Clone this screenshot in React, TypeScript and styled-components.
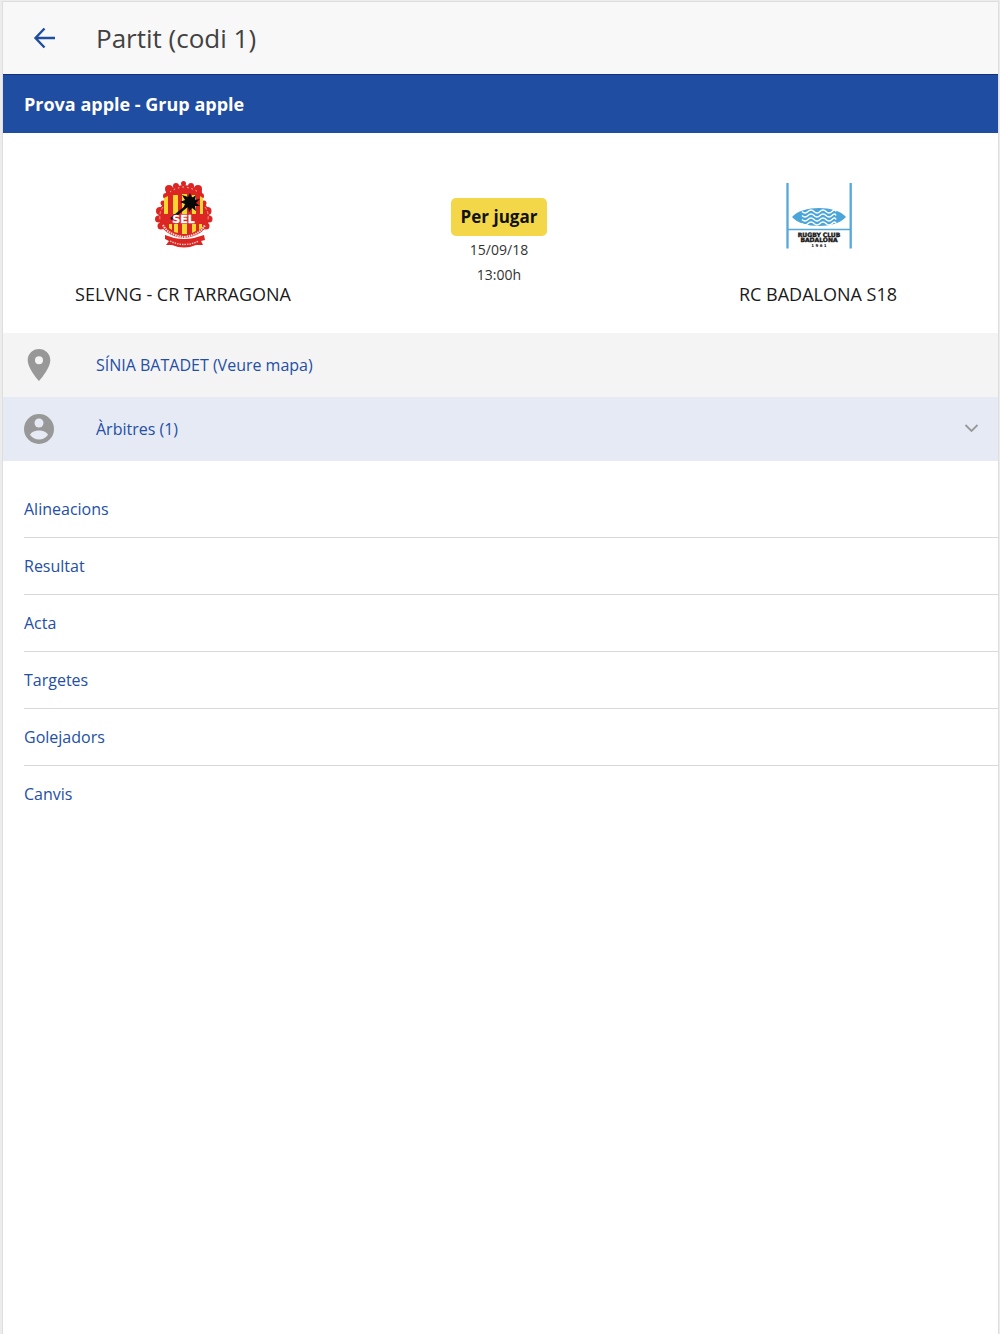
import React from "react";
import styled, { createGlobalStyle } from "styled-components";

const Global = createGlobalStyle`
  *, *::before, *::after { box-sizing: border-box; }
  html { background: #ececec; }
  body {
    margin: 0;
    font-family: "Open Sans", "Noto Sans", sans-serif;
    color: #1a1a1a;
  }
  button { font: inherit; border: 0; padding: 0; background: none; cursor: pointer; }
`;

const Page = styled.div`
  min-height: 100vh;
  padding: 1px 1px 0 2px;
  background: #ececec;
`;

const Screen = styled.div`
  min-height: calc(100vh - 1px);
  background: #fff;
  border: 1px solid #dedede;
  border-bottom: 0;
`;

const Toolbar = styled.header`
  display: flex;
  align-items: center;
  height: 72px;
  padding-left: 28px;
  background: #f8f8f8;
`;

const BackButton = styled.button`
  display: flex;
  width: 65px;
  color: #1f4da1;
`;

const Title = styled.h1`
  margin: 0;
  font-size: 26px;
  line-height: 36px;
  font-weight: 400;
  color: #424242;
`;

const Competition = styled.h2`
  margin: 0;
  padding: 16px 21px;
  background: #1f4da1;
  border-top: 1px solid #12317c;
  color: #fff;
  font-size: 18px;
  line-height: 26px;
  font-weight: 700;
`;

const Match = styled.section`
  display: grid;
  grid-template-columns: 360px 1fr 360px;
  height: 200px;
`;

const Team = styled.div`
  display: flex;
  flex-direction: column;
  align-items: center;
  gap: 31px;
  padding-top: 46px;
  font-size: 18px;
  line-height: 24px;
`;

const Status = styled.div`
  display: flex;
  flex-direction: column;
  align-items: center;
  padding: 65px 3px 0 0;
  font-size: 14px;
  line-height: 25px;
  color: #333;
`;

const Badge = styled.strong`
  padding: 6px 10px;
  margin-bottom: 1px;
  border-radius: 5px;
  background: #f3d748;
  color: #111;
  font-size: 17px;
  line-height: 26px;
`;

const InfoRow = styled.button<{ $tint: string }>`
  display: grid;
  grid-template-columns: 72px 1fr auto;
  align-items: center;
  width: 100%;
  height: 64px;
  padding: 0 17px 0 15px;
  background: ${(p) => p.$tint};
  color: #244fa5;
  font-size: 16px;
  line-height: 24px;
  text-align: left;
  & > svg { display: block; }
`;

const Label = styled.span`
  padding-left: 6px;
`;

const Menu = styled.ul`
  list-style: none;
  margin: 0;
  padding: 20px 0 0 21px;
`;

const MenuItem = styled.li`
  border-bottom: 1px solid #d9d9d9;
  &:last-child { border-bottom: 0; }
`;

const MenuLink = styled.a`
  display: block;
  padding: 16px 0;
  color: #244fa5;
  font-size: 16px;
  line-height: 24px;
  text-decoration: none;
`;

const links = ["Alineacions", "Resultat", "Acta", "Targetes", "Golejadors", "Canvis"];

const BackIcon = () => (
  <svg width="28" height="28" viewBox="0 0 28 28" fill="none" stroke="currentColor" strokeWidth="2.4" aria-hidden="true">
    <path d="M24 14H5M13.500 4.500L4.500 14l9 9.500" />
  </svg>
);

const PinIcon = () => (
  <svg width="42" height="36" viewBox="0 0 42 36" aria-hidden="true">
    <path fill="#989898" fillRule="evenodd" d="M21 2C14.600 2 9.700 6.900 9.700 13.200 9.700 21.600 21 34 21 34S32.300 21.600 32.300 13.200C32.300 6.900 27.400 2 21 2Zm0 7.200a4 4 0 1 1 0 8 4 4 0 0 1 0-8Z" />
  </svg>
);

const PersonIcon = () => (
  <svg width="42" height="36" viewBox="0 0 42 36" aria-hidden="true">
    <circle cx="21" cy="18" r="15" fill="#989898" />
    <circle cx="21" cy="12" r="4.500" fill="#e6eaf4" />
    <path fill="#e6eaf4" d="M12 23.800c1.500-3 5.800-4.200 9-4.200s7.500 1.200 9 4.200c-2 3-5.300 4.800-9 4.800s-7-1.800-9-4.800Z" />
  </svg>
);

const ChevronIcon = () => (
  <svg width="18" height="18" viewBox="0 0 18 18" fill="none" stroke="#999" strokeWidth="1.800" aria-hidden="true">
    <path d="M2.500 5l6 6 6-6" />
  </svg>
);

const scrolls = [
  [35, 16, 3], [50, 16, 3], [28, 19, 4], [57, 19, 4], [25, 26, 3], [60, 26, 3], [22, 33, 2.500], [63, 33, 2.500],
  [19, 41, 4], [66.500, 41, 4], [17.500, 49, 3.500], [68, 49, 3.500], [20, 56, 3.500], [65, 56, 3.500],
];

const SelCrest = () => (
  <svg width="81" height="72" viewBox="2 9 81 72" role="img" aria-label="SEL">
    <g fill="#db2623">
      <path d="M43 15c-6 0-11 4-17 3-2 6 0 9-3 15-4 4-6 10-5 17 2 9 10 17 25 18 15-1 23-9 25-18 1-7-1-13-5-17-3-6-1-9-3-15-6 1-11-3-17-3Z" />
      {scrolls.map(([x, y, r]) => <circle key={`${x}-${y}`} cx={x} cy={y} r={r} />)}
      <circle cx="42.500" cy="13.500" r="2.500" />
    </g>
    <path d="M29 22q5-4 13.500-5Q52 18 57 22" fill="none" stroke="#f6d9d2" strokeWidth="1" strokeDasharray="1.500 3" />
    <path d="M22 37q-4 5-3 13M64 37q4 5 3 13" fill="none" stroke="#f3b8ad" strokeWidth=".8" strokeDasharray="3 2" />
    <path d="M23 28l4-2v20h-4ZM32 25h5v21h-5ZM41 24h5v22h-5ZM51 25h4v21h-4ZM59 26l3 2v18h-3ZM28 54h3v6l-3-2ZM33 54h4v9l-4-1ZM41 54h5v10h-5ZM51 54h4v7l-4 2ZM58 54h3v4l-3 2Z" fill="#f7d730" />
    <path d="M22 44h42v10h-42Z" fill="#db2623" />
    <path d="M30 49l16-13" stroke="#111" strokeWidth="2.600" />
    <circle cx="50" cy="32" r="5" fill="#080808" />
    <path d="M49 23l2 5 4-3-1 5 5-1-4 4 4 3-5 0 1 5-4-3-3 4-1-5-5 2 2-5-5-2 5-2-3-5 6 2Z" fill="#080808" />
    <text x="42.500" y="53" fill="#fff" fontFamily="DejaVu Sans" fontSize="11" fontWeight="700" textAnchor="middle" stroke="#fff" strokeWidth=".3">SEL</text>
    <path d="M22 55q5 10 21 12Q59 65 64 55" fill="none" stroke="#f8e2dc" strokeWidth="2" strokeDasharray="1.500 .8" />
    <path d="M24 65l9 3q10 2 20 0l10-3 1 5-4 1 2 4-7 0q-12 5-24 0l-6 0 3-4-4-2Z" fill="#db2623" />
    <path d="M29 71q14 7 29 0" fill="none" stroke="#f6d2ca" strokeWidth="1.300" strokeDasharray="1.500 1" />
  </svg>
);

const BadalonaCrest = () => (
  <svg width="81" height="72" viewBox="3 9 81 72" role="img" aria-label="Rugby Club Badalona 1961">
    <g fill="none" stroke="#55a8d9">
      <path d="M12.500 13v65.500M75.700 13v65.500" strokeWidth="2.300" />
      <path d="M12.500 59.500h63" strokeWidth="1.500" />
    </g>
    <path d="M17 47C27 35 61 35 71 47 61 59 27 59 17 47Z" fill="#4ca5d9" />
    <g fill="none" stroke="#fff" strokeWidth="1.500">
      {[41.5, 45.500, 49.500, 53.500].map((y) => (
        <path key={y} d={`M27 ${y}q3 3 6 0t6 0 6 0 6 0 6 0 4 0`} />
      ))}
    </g>
    <g fill="#161616" fontFamily="DejaVu Sans" fontWeight="700" textAnchor="middle">
      <text x="44" y="66.500" fontSize="6" stroke="#161616" strokeWidth=".4">RUGBY CLUB</text>
      <text x="44" y="72" fontSize="6" stroke="#161616" strokeWidth=".4">BADALONA</text>
      <text x="44" y="77" fontSize="4">1 9 6 1</text>
    </g>
  </svg>
);

export default function App() {
  return (
    <>
      <Global />
      <Page>
        <Screen>
          <Toolbar>
            <BackButton aria-label="Enrere"><BackIcon /></BackButton>
            <Title>Partit (codi 1)</Title>
          </Toolbar>
          <main>
            <Competition>Prova apple - Grup apple</Competition>
            <Match>
              <Team><SelCrest />SELVNG - CR TARRAGONA</Team>
              <Status>
                <Badge>Per jugar</Badge>
                <time>15/09/18</time>
                <time>13:00h</time>
              </Status>
              <Team><BadalonaCrest />RC BADALONA S18</Team>
            </Match>
            <InfoRow $tint="#f4f4f4"><PinIcon /><Label>SÍNIA BATADET (Veure mapa)</Label></InfoRow>
            <InfoRow $tint="#e6eaf4" aria-expanded="false"><PersonIcon /><Label>Àrbitres (1)</Label><ChevronIcon /></InfoRow>
            <Menu>
              {links.map((name) => (
                <MenuItem key={name}><MenuLink href={`#${name.toLowerCase()}`}>{name}</MenuLink></MenuItem>
              ))}
            </Menu>
          </main>
        </Screen>
      </Page>
    </>
  );
}
